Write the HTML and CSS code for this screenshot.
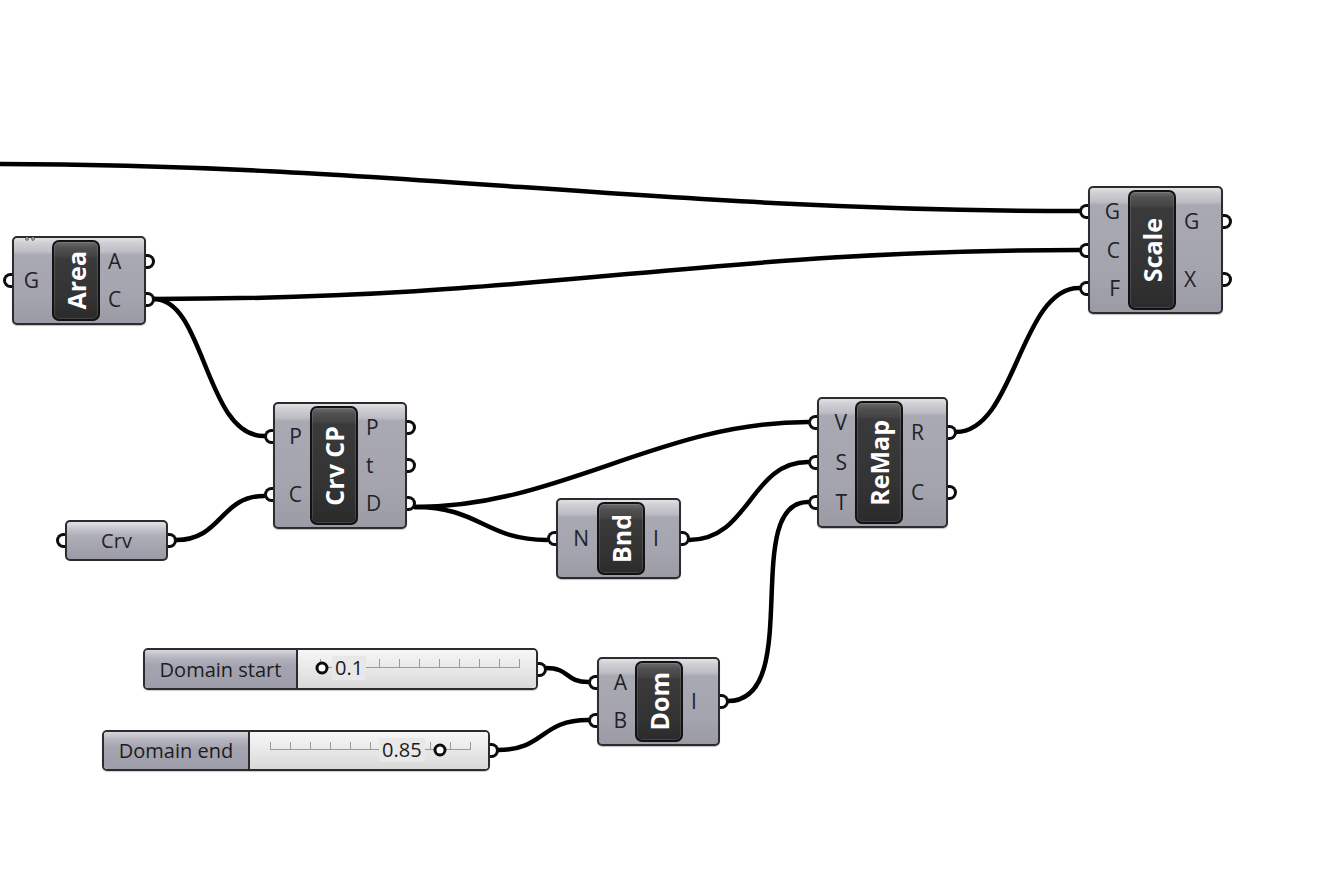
FILE: index.html
```html
<!DOCTYPE html>
<html lang="en">
<head>
    <meta charset="UTF-8">
    <meta name="viewport" content="width=device-width, initial-scale=1.0">
    <title>Grasshopper - Canvas</title>
    <link rel="stylesheet" href="styles.css">
</head>
<body>
    <div class="canvas">
        <!-- wires sit under the components -->
        <svg class="wires" width="1322" height="870" viewBox="0 0 1322 870">
            <path d="M-10 164 C 400 164, 650 211, 1079 211"/>
            <path d="M154 299 C 550 299, 700 250, 1079 250"/>
            <path d="M154 299 C 205 299, 205 436, 264 436"/>
            <path d="M176 540 C 222 540, 220 496, 264 496"/>
            <path d="M415 507 C 560 507, 660 422, 808 422"/>
            <path d="M415 507 C 480 507, 485 540, 547 540"/>
            <path d="M689 540 C 750 540, 750 462, 808 462"/>
            <path d="M728 701 C 805 701, 740 502, 808 502"/>
            <path d="M956 432 C 1015 432, 1020 288, 1079 288"/>
            <path d="M546 668 C 570 668, 565 682, 588 682"/>
            <path d="M498 750 C 545 750, 540 720, 588 720"/>
        </svg>

        <div class="comp n-area">
            <span class="dots"></span>
            <div class="ports ins"><div class="port">G<i class="grip"></i></div></div>
            <div class="cap"><span>Area</span></div>
            <div class="ports outs">
                <div class="port">A<i class="grip"></i></div>
                <div class="port">C<i class="grip"></i></div>
            </div>
        </div>

        <div class="comp n-scale">
            <div class="ports ins">
                <div class="port">G<i class="grip"></i></div>
                <div class="port">C<i class="grip"></i></div>
                <div class="port">F<i class="grip"></i></div>
            </div>
            <div class="cap"><span>Scale</span></div>
            <div class="ports outs">
                <div class="port">G<i class="grip"></i></div>
                <div class="port">X<i class="grip"></i></div>
            </div>
        </div>

        <div class="comp n-crvcp">
            <div class="ports ins">
                <div class="port">P<i class="grip"></i></div>
                <div class="port">C<i class="grip"></i></div>
            </div>
            <div class="cap"><span>Crv CP</span></div>
            <div class="ports outs">
                <div class="port">P<i class="grip"></i></div>
                <div class="port">t<i class="grip"></i></div>
                <div class="port">D<i class="grip"></i></div>
            </div>
        </div>

        <div class="comp n-bnd">
            <div class="ports ins"><div class="port">N<i class="grip"></i></div></div>
            <div class="cap"><span>Bnd</span></div>
            <div class="ports outs"><div class="port">I<i class="grip"></i></div></div>
        </div>

        <div class="comp n-remap">
            <div class="ports ins">
                <div class="port">V<i class="grip"></i></div>
                <div class="port">S<i class="grip"></i></div>
                <div class="port">T<i class="grip"></i></div>
            </div>
            <div class="cap"><span>ReMap</span></div>
            <div class="ports outs">
                <div class="port">R<i class="grip"></i></div>
                <div class="port">C<i class="grip"></i></div>
            </div>
        </div>

        <div class="comp n-dom">
            <div class="ports ins">
                <div class="port">A<i class="grip"></i></div>
                <div class="port">B<i class="grip"></i></div>
            </div>
            <div class="cap"><span>Dom</span></div>
            <div class="ports outs"><div class="port">I<i class="grip"></i></div></div>
        </div>

        <div class="param n-crv">
            <i class="grip grip-in"></i>
            Crv
            <i class="grip grip-out"></i>
        </div>

        <div class="slider n-start">
            <div class="s-label">Domain start</div>
            <div class="s-value">
                <svg class="track" width="239" height="37" viewBox="0 0 239 37">
                    <line class="rail" x1="22" y1="17.5" x2="221" y2="17.5"/>
                    <path class="ticks" d="M22.5 9v9M42.5 9v9M62.5 9v9M81.5 9v9M101.5 9v9M121.5 9v9M141.5 9v9M161.5 9v9M181.5 9v9M201.5 9v9M221.5 9v9"/>
                    <circle class="knob" cx="24" cy="18" r="5"/>
                </svg>
                <span class="s-text start-text">0.1</span>
            </div>
            <i class="grip grip-out"></i>
        </div>

        <div class="slider n-end">
            <div class="s-label">Domain end</div>
            <div class="s-value">
                <svg class="track" width="239" height="36" viewBox="0 0 239 36">
                    <line class="rail" x1="20" y1="17.5" x2="220" y2="17.5"/>
                    <path class="ticks" d="M20.5 10v8M40.5 10v8M60.5 10v8M80.5 10v8M100.5 10v8M120.5 10v8M140.5 10v8M160.5 10v8M180.5 10v8M200.5 10v8M220.5 10v8"/>
                    <circle class="knob" cx="190" cy="18" r="5"/>
                </svg>
                <span class="s-text end-text">0.85</span>
            </div>
            <i class="grip grip-out"></i>
        </div>
    </div>
</body>
</html>
```

FILE: styles.css
```css
body {
    margin: 0;
    padding: 0;
    background: #ffffff;
    font-family: "Open Sans", "DejaVu Sans", sans-serif;
    color: #1e1e1e;
}

.canvas {
    position: relative;
    width: 1322px;
    height: 870px;
    overflow: hidden;
    background: #ffffff;
}

.wires {
    position: absolute;
    left: 0;
    top: 0;
}

.wires path {
    fill: none;
    stroke: #000000;
    stroke-width: 4.5;
    stroke-linecap: round;
}

/* components */
.comp {
    position: absolute;
    box-sizing: border-box;
    display: grid;
    grid-template-columns: var(--in) 48px 1fr;
    border: 2px solid #2c2c2e;
    border-radius: 5px;
    background: linear-gradient(#e2e2e6 0, #cfcfd4 5px, #bcbcc4 14px, #a9a9b4 17px, #a4a4af 70%, #9b9ba6 100%);
    box-shadow: 0 1px 1px rgba(0, 0, 0, 0.25);
}

.n-area  { left: 12px;   top: 236px; width: 134px; height: 89px; --in: 38px; }
.n-scale { left: 1088px; top: 186px; width: 135px; height: 128px; --in: 38px; }
.n-crvcp { left: 273px;  top: 402px; width: 134px; height: 127px; --in: 35px; }
.n-bnd   { left: 556px;  top: 498px; width: 125px; height: 81px; --in: 39px; }
.n-remap { left: 817px;  top: 397px; width: 131px; height: 131px; --in: 36px; }
.n-dom   { left: 597px;  top: 657px; width: 123px; height: 89px; --in: 36px; }

.n-area .ins .port {
    padding-right: 13px;
}

.dots {
    position: absolute;
    left: 10px;
    top: -1px;
    width: 12px;
    height: 4px;
    background: radial-gradient(circle at 3px 2px, #8a8a90 1.6px, transparent 2px),
                radial-gradient(circle at 9px 2px, #8a8a90 1.6px, transparent 2px);
}

.ports {
    display: flex;
    flex-direction: column;
    padding: 4px 0;
}

.port {
    position: relative;
    flex: 1;
    display: flex;
    align-items: center;
    font-size: 21px;
    line-height: 1;
    color: #222226;
}

.ins .port {
    justify-content: flex-end;
    padding-right: 8px;
}

.outs .port {
    justify-content: flex-start;
    padding-left: 8px;
}

.grip {
    position: absolute;
    top: 50%;
    width: 6px;
    height: 9px;
    margin-top: -7.5px;
    border: 3px solid #0c0c0c;
    background: #ffffff;
}

.ins .grip,
.grip-in {
    left: -11px;
    border-right: none;
    border-radius: 9px 0 0 9px;
}

.outs .grip,
.grip-out {
    right: -11px;
    border-left: none;
    border-radius: 0 9px 9px 0;
}

.cap {
    margin: 2px 0;
    box-sizing: border-box;
    display: flex;
    align-items: center;
    justify-content: center;
    border: 2px solid #121212;
    border-radius: 7px;
    background: linear-gradient(#6a6a6a 0, #505050 6px, #444444 14px, #3a3a3a 16px, #333333 70%, #2b2b2b 100%);
    box-shadow: inset 0 0 0 1px rgba(255, 255, 255, 0.12);
}

.cap span {
    writing-mode: vertical-rl;
    transform: rotate(180deg);
    color: #ffffff;
    font-weight: 700;
    font-size: 25px;
    line-height: 1;
    white-space: nowrap;
}

/* floating parameter */
.param {
    position: absolute;
    box-sizing: border-box;
    display: flex;
    align-items: center;
    justify-content: center;
    border: 2px solid #2c2c2e;
    border-radius: 5px;
    background: linear-gradient(#e2e2e6 0, #c8c8ce 6px, #aeaeb8 14px, #a4a4af 70%, #9b9ba6 100%);
    font-size: 20px;
    color: #222226;
}

.n-crv { left: 65px; top: 520px; width: 103px; height: 41px; }

/* number sliders */
.slider {
    position: absolute;
    box-sizing: border-box;
    display: flex;
    border: 2px solid #2c2c2e;
    border-radius: 5px;
    box-shadow: 0 1px 1px rgba(0, 0, 0, 0.2);
}

.n-start { left: 143px; top: 648px; width: 395px; height: 42px; }
.n-end   { left: 102px; top: 730px; width: 388px; height: 41px; }

.n-start .s-label { width: 153px; }
.n-end .s-label { width: 146px; }

.s-label {
    box-sizing: border-box;
    display: flex;
    align-items: center;
    justify-content: center;
    border-right: 2px solid #2c2c2e;
    border-radius: 3px 0 0 3px;
    background: linear-gradient(#d6d6dc 0, #b4b4bf 8px, #a4a4b1 16px, #9e9eab 100%);
    font-size: 20px;
    color: #1c1c20;
    white-space: nowrap;
}

.s-value {
    position: relative;
    flex: 1;
    border-radius: 0 3px 3px 0;
    background: linear-gradient(#f6f6f6 0, #ebebeb 40%, #d9d9d9 100%);
}

.track {
    position: absolute;
    left: 0;
    top: 0;
}

.rail,
.ticks {
    stroke: #9a9a9a;
    stroke-width: 1;
    fill: none;
}

.knob {
    fill: #ffffff;
    stroke: #0c0c0c;
    stroke-width: 3;
}

.s-text {
    position: absolute;
    top: 6px;
    padding: 0 3px;
    background: #e8e8e8;
    font-size: 20px;
    line-height: 24px;
    color: #1c1c1c;
}

.start-text { left: 34px; }
.end-text { left: 129px; }
```
